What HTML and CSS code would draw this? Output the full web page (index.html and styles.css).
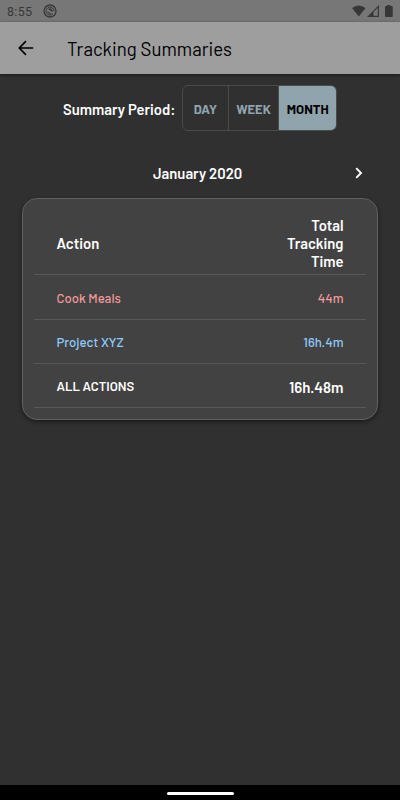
FILE: index.html
```
<!DOCTYPE html>
<html lang="en">
<head>
    <meta charset="UTF-8">
    <meta name="viewport" content="width=device-width, initial-scale=1">
    <title>Tracking Summaries</title>
    <link rel="stylesheet" href="styles.css">
</head>
<body>
    <div class="status-bar">
        <span class="clock">8:55</span>
        <svg class="status-app" width="14" height="14" viewBox="0 0 14 14">
            <circle cx="7" cy="7" r="6" fill="none" stroke="#373737" stroke-width="1.3"/>
            <path d="M9.700 10A4 4 0 1 1 11 7.200" fill="none" stroke="#373737" stroke-width="1"/>
            <path d="M5 5Q7 3.500 9 5.200 9.900 6.300 9.500 8.300L7.500 6.700zM4.300 7.200L8.800 9.900Q5 10.500 4.300 7.200z" fill="#373737"/>
        </svg>
        <svg class="status-icons" width="42" height="14" viewBox="0 0 42 14">
            <path d="M0 4Q6.800-1 13.600 4L6.800 12.500z" fill="#373737"/>
            <path d="M15 13L27 1V13z" fill="#373737"/>
            <path d="M21.500 8L25.800 3.700V11.800H21.500z" fill="#777"/>
            <path d="M35 2V1h3.500v1H40q.7 0 .7.7v9.600q0 .7-.7.7h-6.300q-.7 0-.7-.7V2.700q0-.7.7-.7z" fill="#373737"/>
        </svg>
    </div>

    <header class="app-bar">
        <svg class="back" width="16" height="16" viewBox="0 0 16 16">
            <path d="M15.200 8H1.600M8 1.200L1.300 8 8 14.800" fill="none" stroke="#000" stroke-width="1.700"/>
        </svg>
        <h1>Tracking Summaries</h1>
    </header>

    <main>
        <div class="period">
            <span class="period-label">Summary Period:</span>
            <div class="toggle">
                <button class="day">DAY</button>
                <button class="week">WEEK</button>
                <button class="month selected">MONTH</button>
            </div>
        </div>

        <div class="month-nav">
            <span class="month-name">January 2020</span>
            <svg class="next" width="8" height="12" viewBox="0 0 8 12">
                <path d="M1.200 1.200L6 6 1.200 10.800" fill="none" stroke="#fff" stroke-width="1.900"/>
            </svg>
        </div>

        <div class="card">
            <table>
                <tr class="head">
                    <th>Action</th>
                    <th>Total<br>Tracking<br>Time</th>
                </tr>
                <tr class="cook">
                    <td>Cook Meals</td>
                    <td>44m</td>
                </tr>
                <tr class="project">
                    <td>Project XYZ</td>
                    <td>16h.4m</td>
                </tr>
                <tr class="total">
                    <td>ALL ACTIONS</td>
                    <td>16h.48m</td>
                </tr>
            </table>
        </div>
    </main>

    <div class="nav-bar"><div class="home-pill"></div></div>
</body>
</html>
```

FILE: styles.css
```
* {
    box-sizing: border-box;
}
body {
    margin: 0;
    height: 800px;
    display: flex;
    flex-direction: column;
    overflow: hidden;
    font-family: Barlow, Roboto, sans-serif;
    color: #fff;
    background: #303030;
}
.status-bar {
    height: 22px;
    display: flex;
    align-items: center;
    padding: 0 6px 0 7px;
    background: #777;
    color: #373737;
}
.clock {
    width: 36px;
    font-family: Roboto, sans-serif;
    font-size: 12.5px;
    letter-spacing: 0.3px;
}
.status-icons {
    margin-left: auto;
}
.app-bar {
    height: 52px;
    display: flex;
    align-items: center;
    padding-left: 18px;
    background: #9e9e9e;
    color: #000;
    box-shadow: 0 1px 3px rgba(0, 0, 0, 0.5);
}
.back {
    margin-top: -1px;
}
h1 {
    margin: 1px 0 0 33px;
    font-size: 18.6px;
    font-weight: 400;
    letter-spacing: 0.03px;
}
main {
    flex: 1;
}
.period {
    display: flex;
    align-items: center;
    padding: 11px 0 0 63px;
}
.period-label {
    width: 119px;
    padding-top: 2px;
    font-size: 14.8px;
    font-weight: 600;
    white-space: nowrap;
}
.toggle {
    display: flex;
    width: 155px;
    height: 46px;
    border: 1px solid #494949;
    border-radius: 6px;
    overflow: hidden;
}
.toggle button {
    padding: 1px 0 0;
    border: none;
    border-right: 1px solid #494949;
    background: none;
    color: #90a4ae;
    font-family: inherit;
    font-size: 13px;
    font-weight: 700;
}
.toggle .day {
    width: 46px;
}
.toggle .week {
    width: 51px;
}
.toggle .month {
    width: 57px;
}
.toggle .selected {
    border-right: none;
    background: #90a4ae;
    color: #000;
}
.month-nav {
    height: 67px;
    display: flex;
    align-items: center;
    padding: 16px 37px 0 153px;
}
.month-name {
    font-size: 14.8px;
    font-weight: 600;
}
.next {
    margin-left: auto;
}
.card {
    width: 356px;
    height: 222px;
    margin: 0 0 0 22px;
    padding: 11px;
    border: 1px solid #616161;
    border-radius: 15px;
    background: #424242;
    box-shadow: 0 2px 4px rgba(0, 0, 0, 0.45);
}
table {
    width: 100%;
    border-collapse: separate;
    border-spacing: 0;
}
th, td {
    height: 44.4px;
    padding: 1px 22.5px 0;
    border-bottom: 1px solid #575757;
    text-align: left;
    font-size: 13.1px;
    font-weight: 500;
}
th:last-child, td:last-child {
    text-align: right;
}
.head th {
    height: 65px;
    padding-top: 4px;
    font-size: 14.8px;
    font-weight: 600;
    line-height: 17.7px;
}
.cook {
    color: #ef9a9a;
}
.cook td {
    height: 45px;
    padding-top: 2px;
}
.project {
    color: #90caf9;
}
.project td {
    height: 44px;
}
.total td {
    height: 44px;
    font-weight: 600;
}
.total td:last-child {
    padding-top: 2px;
    font-size: 15px;
}
.nav-bar {
    height: 15px;
    display: flex;
    justify-content: center;
    align-items: center;
    background: #000;
}
.home-pill {
    width: 67px;
    height: 3px;
    margin-top: 2px;
    border-radius: 2px;
    background: #fff;
}
```
